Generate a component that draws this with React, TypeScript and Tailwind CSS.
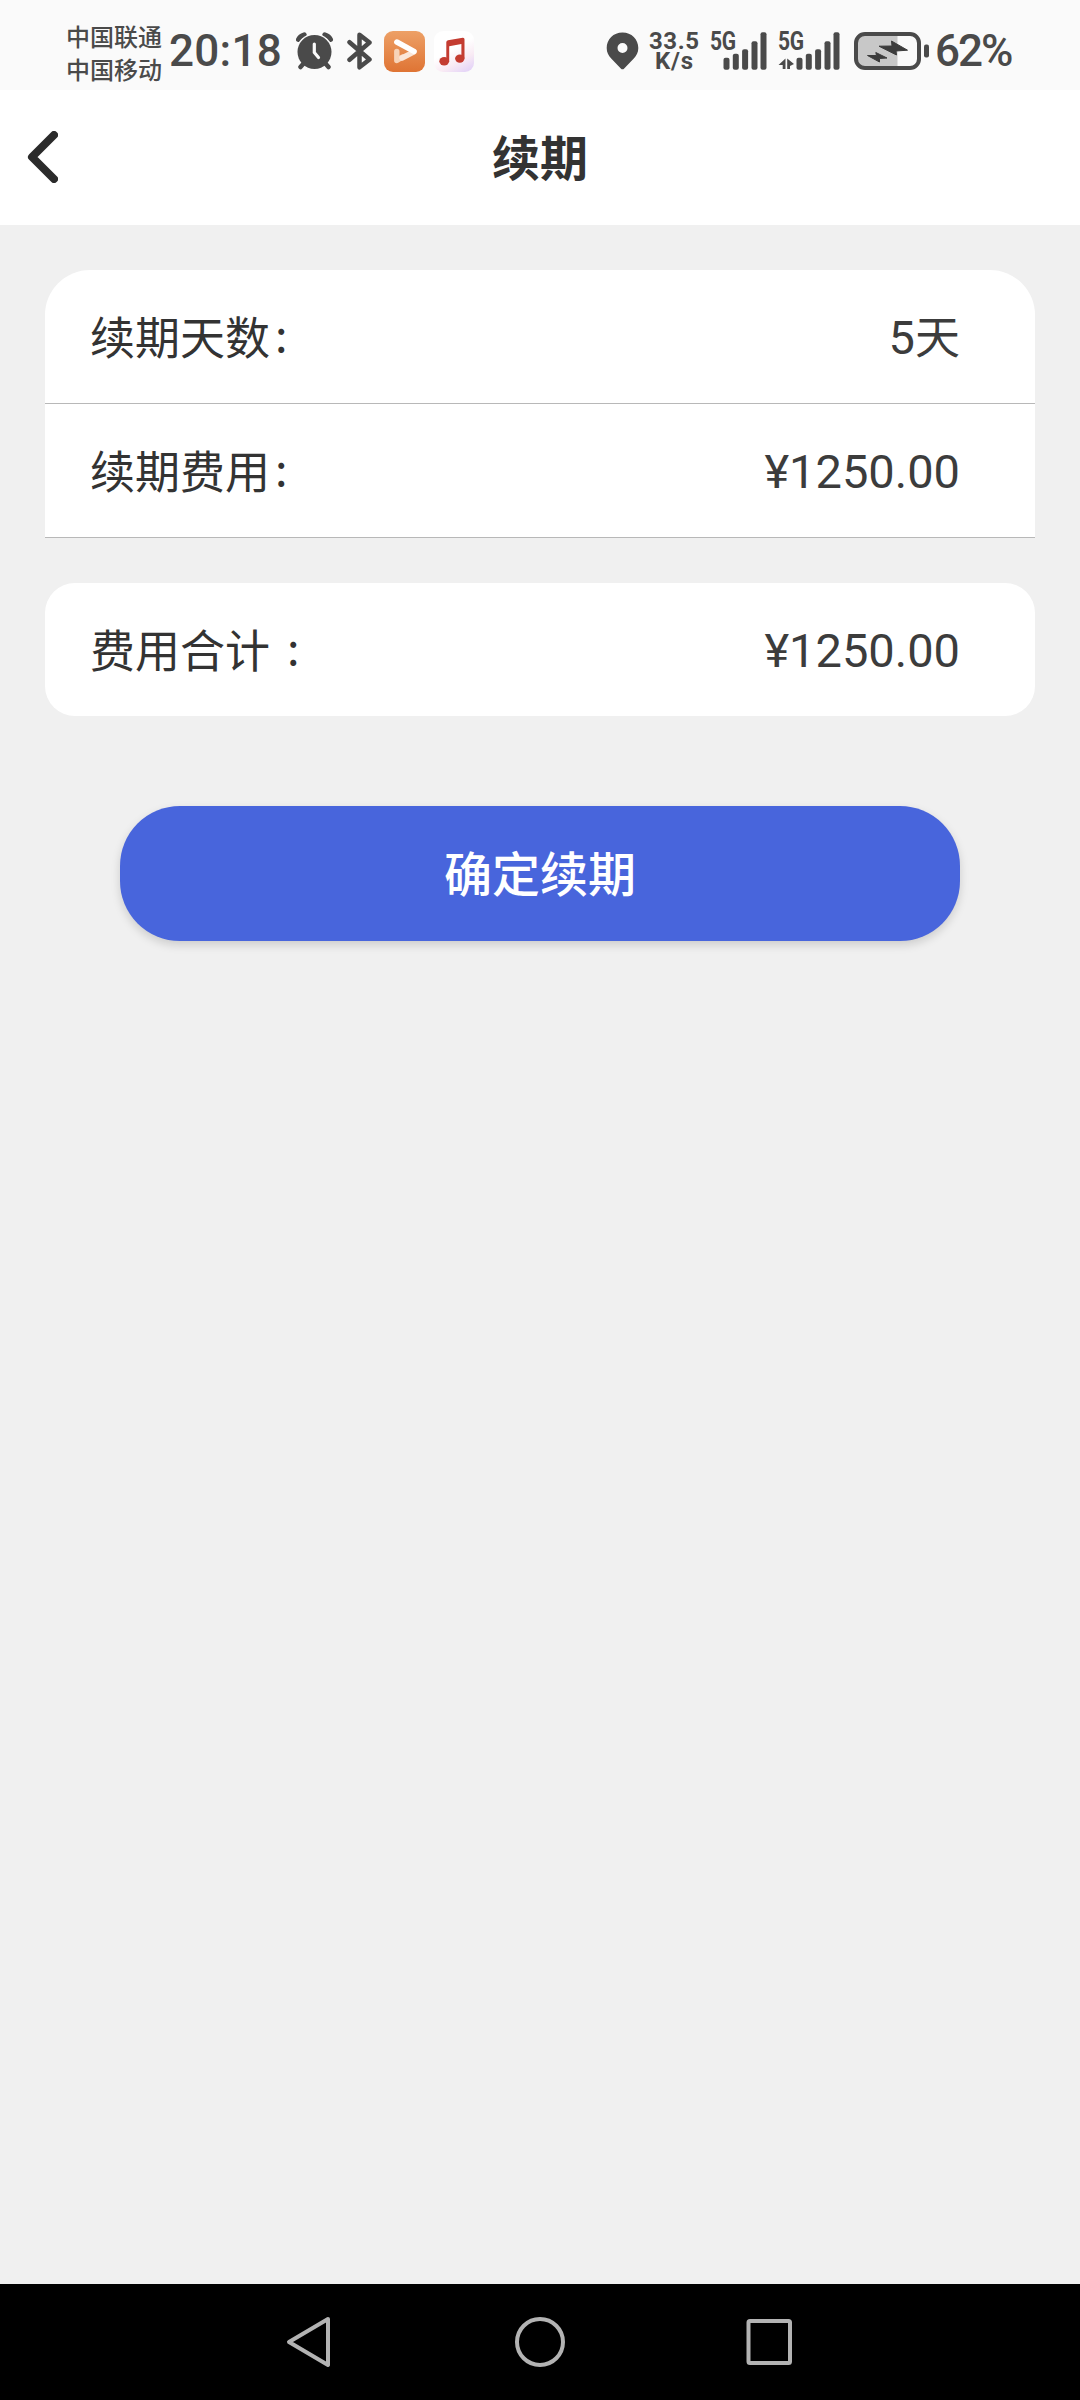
import clsx from "clsx";

const BARS = [
  { x: 0, h: 12 },
  { x: 9.3, h: 16 },
  { x: 18.6, h: 20.5 },
  { x: 28, h: 28.5 },
  { x: 37, h: 37.5 },
];

function AlarmIcon() {
  return (
    <svg width="38" height="38" viewBox="0 0 38 38" className="shrink-0">
      <g fill="none" stroke="#4a4a4a" strokeWidth="5" strokeLinecap="round">
        <path d="M2.5 7.500C3.500 5.2 5.5 3.6 8.2 2.8" />
        <path d="M34.500 7.500C33.500 5.2 31.500 3.6 28.800 2.8" />
      </g>
      <circle cx="18.5" cy="20" r="18.5" fill="#fafafa" />
      <path d="M8 31l-3.5 4M29 31l3.5 4" stroke="#4a4a4a" strokeWidth="4.5" strokeLinecap="round" />
      <circle cx="18.5" cy="20" r="17" fill="#4a4a4a" />
      <path d="M18.3 12v8.5l4.2 5" fill="none" stroke="#fafafa" strokeWidth="3.2" strokeLinecap="round" />
    </svg>
  );
}

function BluetoothIcon() {
  return (
    <svg width="26" height="38" viewBox="0 0 26 38" className="shrink-0">
      <path
        d="M2.5 10.2L22.5 27.5L12.5 35.3V2.7L22.5 10.5L2.5 27.8"
        fill="none"
        stroke="#4a4a4a"
        strokeWidth="4.5"
        strokeLinecap="round"
        strokeLinejoin="round"
      />
    </svg>
  );
}

function VideoAppIcon() {
  return (
    <svg width="41" height="41" viewBox="0 0 41 41" className="shrink-0">
      <defs>
        <linearGradient id="video" x1="0" y1="0" x2="0" y2="1">
          <stop offset="0" stopColor="#eda066" />
          <stop offset="1" stopColor="#df7434" />
        </linearGradient>
      </defs>
      <rect width="41" height="41" rx="9" fill="url(#video)" />
      <g fill="none" strokeLinecap="round" strokeLinejoin="round" strokeWidth="5.4">
        <path d="M12.8 20.5V29.5L18.5 26" stroke="#f7d3b8" />
        <path d="M18 27L30 20.8" stroke="#fbe6d8" />
        <path d="M12.8 11L30 20.3" stroke="#fff" />
      </g>
    </svg>
  );
}

function MusicAppIcon() {
  return (
    <svg width="40" height="41" viewBox="0 0 40 41" className="shrink-0">
      <defs>
        <linearGradient id="music" x1="0.2" y1="0" x2="0.75" y2="1">
          <stop offset="0.45" stopColor="#ffffff" />
          <stop offset="0.75" stopColor="#f9ebf4" />
          <stop offset="1" stopColor="#e6d6f7" />
        </linearGradient>
      </defs>
      <rect width="40" height="41" rx="9" fill="url(#music)" />
      <g fill="#c43c31">
        <path d="M12.3 11.2Q12.3 9.6 14 9.3L28.7 6.8Q30.5 6.6 30.5 8.3V27.5H27.4V13L15.2 15.2V30.5H12.3Z" />
        <ellipse cx="10.2" cy="30.3" rx="4.9" ry="4.2" />
        <ellipse cx="25.8" cy="27.6" rx="4.7" ry="4.2" />
      </g>
    </svg>
  );
}

function PinIcon() {
  return (
    <svg width="33" height="38" viewBox="0 0 33 38" className="shrink-0">
      <path
        fillRule="evenodd"
        fill="#4a4a4a"
        d="M16.5 0.5C25.6 0.5 32.3 7.3 32.3 16C32.3 20.5 30.5 23.6 27.8 26.5L18.2 36.5Q16.5 38.2 14.8 36.5L5.2 26.5C2.5 23.6 0.7 20.5 0.7 16C0.7 7.3 7.4 0.5 16.5 0.5ZM16.5 11A5 5 0 1 0 16.5 21A5 5 0 1 0 16.5 11Z"
      />
    </svg>
  );
}

function Signal({ data }: { data?: boolean }) {
  return (
    <div className={clsx("relative h-[38px] shrink-0", data ? "w-[62px]" : "w-[57px]")}>
      <svg width="62" height="38" viewBox="0 0 62 38" fill="#4a4a4a">
        {BARS.map((b) => (
          <rect key={b.x} x={b.x + (data ? 18.5 : 13.5)} y={37.7 - b.h} width="6" height={b.h} rx="2" />
        ))}
        {data && <path d="M7.5 26.5V37H4.7V33H0.5ZM9.2 26.5L16 32L12 34V37H9.2Z" />}
      </svg>
      <span className="absolute left-0 top-0 origin-left scale-x-[0.84] text-[25px] leading-[20px] font-bold tracking-[-0.5px]">
        5G
      </span>
    </div>
  );
}

function BatteryIcon() {
  return (
    <svg width="76" height="38" viewBox="0 0 76 38" className="shrink-0">
      <path d="M11 2H43.5V36H11Q2 36 2 27V11Q2 2 11 2Z" fill="#c8c8c8" />
      <rect x="2" y="2" width="63" height="34" rx="9" fill="none" stroke="#4a4a4a" strokeWidth="4" />
      <rect x="70" y="12.5" width="5" height="13" rx="2" fill="#4a4a4a" />
      <path
        d="M25 14.2L38 14L37.5 9L53.5 18.2L42 19L42.5 23Z M13.5 23.5L22.5 23.5L21.8 20.5L33 26L25.5 26.5L25.5 30Z"
        fill="#3c3c3c"
        stroke="#3c3c3c"
      />
    </svg>
  );
}

function StatusBar() {
  return (
    <div className="flex h-[90px] items-center bg-[#fafafa] pt-3 pl-[66px] pr-[59px] font-[Roboto,'Noto_Sans_CJK_SC',sans-serif] text-[#4a4a4a]">
      <div className="w-[103px] pt-[7px] text-[24px] leading-[33px] font-medium whitespace-nowrap">
        <div>中国联通</div>
        <div>中国移动</div>
      </div>
      <div className="w-[127px] text-[44px] leading-none font-medium tracking-[0.3px]">20:18</div>
      <AlarmIcon />
      <div className="ml-[13px] flex">
        <BluetoothIcon />
      </div>
      <div className="ml-[11px] flex gap-[9px]">
        <VideoAppIcon />
        <MusicAppIcon />
      </div>
      <div className="ml-auto flex items-center">
        <PinIcon />
        <div className="ml-[10px] w-[61px] text-[24px] leading-[20px] font-bold">
          <div className="tracking-[0.6px]">33.5</div>
          <div className="pl-[6px] tracking-[0.8px]">K/s</div>
        </div>
        <Signal />
        <div className="ml-[11px] flex">
          <Signal data />
        </div>
        <div className="ml-[14px] flex">
          <BatteryIcon />
        </div>
        <div className="ml-[5px] w-[86px] text-[44px] leading-none font-medium tracking-[-2px]">62%</div>
      </div>
    </div>
  );
}

function Header() {
  return (
    <header className="flex h-[135px] items-center bg-white pl-[26px] pr-[58px]">
      <button type="button" aria-label="返回" className="pb-[2px]">
        <svg width="32" height="52" viewBox="0 0 32 52">
          <path d="M28 4L6 26L28 48" fill="none" stroke="#2b2b2b" strokeWidth="8" strokeLinecap="round" strokeLinejoin="round" />
        </svg>
      </button>
      <h1 className="flex-1 pb-[6px] text-center text-[48px] leading-none font-bold">续期</h1>
    </header>
  );
}

type RowProps = {
  label: string;
  value: string;
  unit?: string;
  line?: boolean;
  wide?: boolean;
};

function Row({ label, value, unit, line, wide }: RowProps) {
  return (
    <div
      className={clsx(
        "flex items-center justify-between pl-[45px] pr-[75px] text-[45px] leading-none",
        line ? "h-[134px] border-b border-[#b8b8b8]" : "h-[133px]"
      )}
    >
      <span className="flex pb-[3px]">
        {label}
        <span className={clsx("-mt-[3px] pb-[3px]", wide ? "pl-[17px]" : "pl-[5px]")}>:</span>
      </span>
      <span className="pt-[2px] font-[Roboto,'Noto_Sans_CJK_SC',sans-serif] text-[#3c3c3c]">
        <span className="text-[47px]">{value}</span>
        {unit}
      </span>
    </div>
  );
}

export default function App() {
  return (
    <div className="flex h-[2400px] w-[1080px] flex-col bg-[#f0f0f0] font-['Noto_Sans_CJK_SC',sans-serif] text-[#333]">
      <StatusBar />
      <Header />
      <main className="flex flex-1 flex-col px-[45px] pt-[45px]">
        <section className="rounded-t-[45px] bg-white">
          <Row label="续期天数" value="5" unit="天" line />
          <Row label="续期费用" value="¥1250.00" line />
        </section>
        <section className="mt-[45px] rounded-[30px] bg-white">
          <Row label="费用合计" value="¥1250.00" wide />
        </section>
        <button
          type="button"
          className="mx-[75px] mt-[90px] h-[135px] rounded-[60px] bg-[#4865dc] pb-[5px] text-[48px] leading-none font-medium text-white shadow-[0_4px_10px_rgba(0,0,0,0.15)]"
        >
          确定续期
        </button>
      </main>
      <nav className="flex h-[116px] items-center bg-black pl-[286px]">
        <svg width="508" height="56" viewBox="0 0 508 56" fill="none" stroke="#b3b3b3" strokeWidth="4" strokeLinejoin="round">
          <path d="M42 5L3 28L42 51Z" />
          <circle cx="254" cy="28" r="23" />
          <rect x="462.5" y="7" width="41.5" height="42" rx="1.5" />
        </svg>
      </nav>
    </div>
  );
}
